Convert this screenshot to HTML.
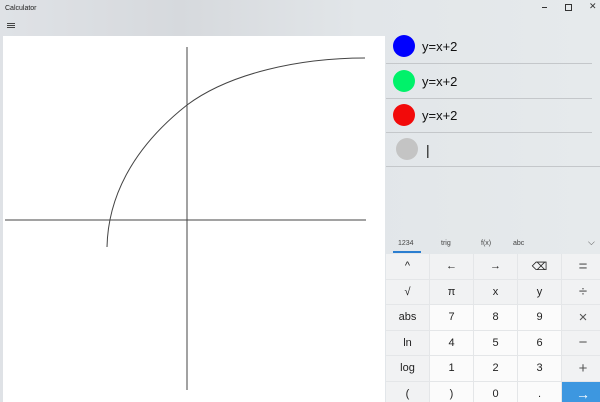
<!DOCTYPE html>
<html><head><style>
html,body{margin:0;width:600px;height:402px;overflow:hidden}
body{font-family:"Liberation Sans",sans-serif;background:linear-gradient(90deg,#dfe2e6 0%,#d6d9dd 30%,#e2e6e9 60%,#e6eaec 100%);position:relative}
.t{position:absolute;font-size:7px;color:#222;left:5px;top:5px}
.graph{position:absolute;left:3px;top:36px;width:382px;height:366px;background:#fff}
.eq{position:absolute;left:386px;width:206px;border-bottom:1px solid #c4c7ca;height:34px}
.eq .c{position:absolute;left:7px;top:6px;width:22px;height:22px;border-radius:50%}
.eq span{position:absolute;left:36px;top:10px;font-size:13px;color:#111}
.tabs{position:absolute;left:386px;top:236px;width:214px;height:18px;font-size:7px;color:#444}
.grid{position:absolute;left:386px;top:254px;width:214px;height:160px;display:grid;grid-template-columns:43px 43px 43px 43px 42px;grid-auto-rows:24.5px;gap:1px;background:#e4e6e8}
.grid div{background:#f1f2f3;display:flex;align-items:center;justify-content:center;font-size:11px;color:#222}
.grid div.w{background:#fbfbfb}
.grid div.o{font-size:15px;color:#555;font-weight:300}
</style></head><body>
<div class="t">Calculator</div>
<div style="position:absolute;left:7px;top:23px;width:8px;height:1px;background:#444;box-shadow:0 2px 0 #444,0 4px 0 #444"></div>
<div style="position:absolute;left:542px;top:7px;width:5px;height:1px;background:#333"></div>
<div style="position:absolute;left:565px;top:4px;width:5px;height:5px;border:1px solid #333"></div>
<div style="position:absolute;left:589px;top:1px;font-size:9px;color:#333">✕</div>
<div class="graph"><svg width="382" height="366" style="position:absolute;left:0;top:0">
<g transform="translate(-3,-36)" fill="none" stroke="#444" stroke-width="1">
<line x1="5" y1="220" x2="366" y2="220"/><line x1="187" y1="47" x2="187" y2="390"/>
<path d="M107,247 C108,200 130,150 187,105 C230,73 300,58 365,58"/></g></svg></div>
<div class="eq" style="top:29px"><div class="c" style="background:#0000ff"></div><span>y=x+2</span></div>
<div class="eq" style="top:64px"><div class="c" style="background:#00f26a"></div><span>y=x+2</span></div>
<div class="eq" style="top:98px"><div class="c" style="background:#f20a0a"></div><span>y=x+2</span></div>
<div class="eq" style="top:132px;width:214px"><div class="c" style="background:#c4c4c4;left:10px"></div><span style="left:40px;font-size:14px">|</span></div>
<div class="tabs"><span style="position:absolute;left:12px;top:4px">1234</span><div style="position:absolute;left:7px;top:15px;width:28px;height:1.5px;background:#2b7ed0"></div><span style="position:absolute;left:55px;top:4px">trig</span><span style="position:absolute;left:95px;top:4px">f(x)</span><span style="position:absolute;left:127px;top:4px">abc</span><span style="position:absolute;left:202px;top:1px;font-size:9px">⌵</span></div>
<div class="grid">
<div>^</div><div>←</div><div>→</div><div>⌫</div><div class="o">=</div>
<div>√</div><div>π</div><div>x</div><div>y</div><div class="o">÷</div>
<div>abs</div><div class="w">7</div><div class="w">8</div><div class="w">9</div><div class="o">×</div>
<div>ln</div><div class="w">4</div><div class="w">5</div><div class="w">6</div><div class="o">−</div>
<div>log</div><div class="w">1</div><div class="w">2</div><div class="w">3</div><div class="o">+</div>
<div>(</div><div class="w">)</div><div class="w">0</div><div class="w">.</div><div style="background:#3d97e0;color:#fff;font-size:14px">→</div>
</div>
</body></html>
